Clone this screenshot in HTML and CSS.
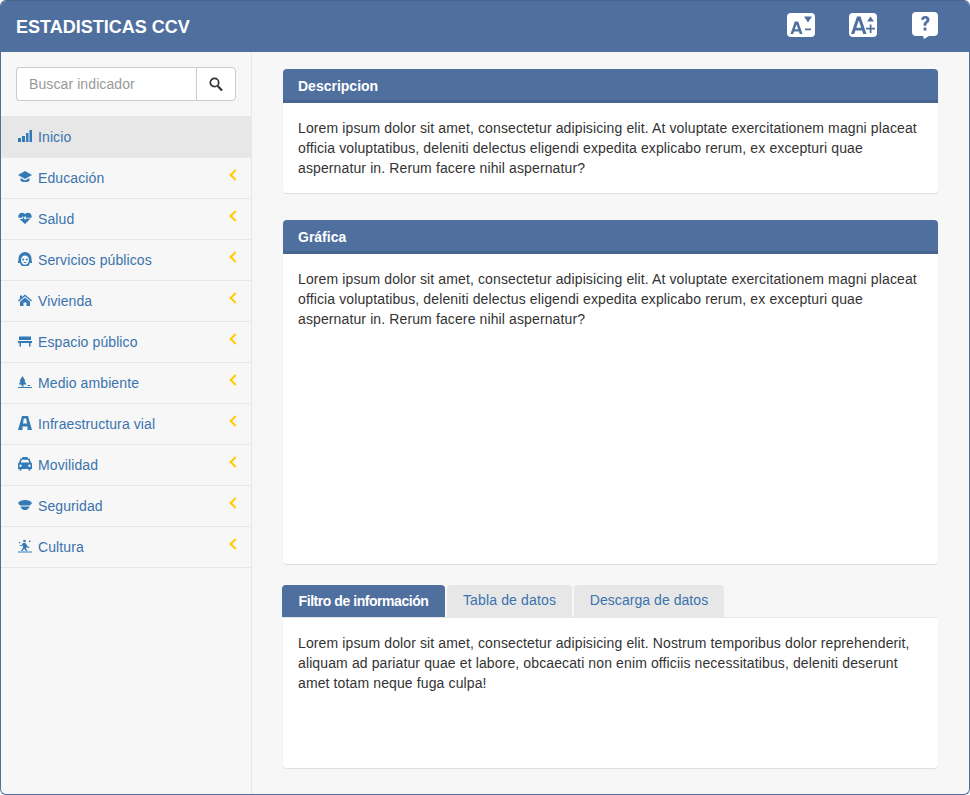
FILE: index.html
```html
<!DOCTYPE html>
<html lang="es">
<head>
<meta charset="utf-8">
<title>Estadisticas CCV</title>
<link rel="stylesheet" href="styles.css">
</head>
<body>
<div class="app">
  <header class="topbar">
    <div class="brand">ESTADISTICAS CCV</div>
    <div class="tools">
      <svg class="tool" width="28" height="24" viewBox="0 0 28 24"><rect width="28" height="24" rx="4" fill="#fff"/><path fill="#4f6f9f" fill-rule="evenodd" d="M7.800 8.500h3.400L15.500 21h-2.800l-.8-2.500H7L6.200 21H3.500ZM9.500 11.500 7.800 16.300h3.400Z"/><path fill="#4f6f9f" d="M17 3.500h8l-4 6ZM18 15.500h6v1.800h-6Z"/></svg>
      <svg class="tool" width="28" height="24" viewBox="0 0 28 24"><rect width="28" height="24" rx="4" fill="#fff"/><path fill="#4f6f9f" fill-rule="evenodd" d="M8 3.500h3.500L17.500 21h-3.300l-1.100-3.500H6.400L5.300 21H2ZM9.800 7.500 7.300 14.800h4.900Z"/><path fill="#4f6f9f" d="M21.500 3.500l3.500 5h-7ZM20.700 11.500h1.800v3.300H26v1.800h-3.500V20h-1.800v-3.400H17v-1.800h3.700Z"/></svg>
      <svg class="tool help" width="26" height="27" viewBox="0 0 26 27"><path fill="#fff" d="M4 0h18a4 4 0 0 1 4 4v16a4 4 0 0 1-4 4h-5l-5 3-1-3H4a4 4 0 0 1-4-4V4a4 4 0 0 1 4-4Z"/><path fill="#4f6f9f" d="M9 7.500C9.500 5 11 4 13.300 4c2.500 0 4.200 1.500 4.200 3.700 0 1.700-.9 2.600-2 3.400-.8.600-1.100 1-1.100 2v.6h-2.800v-.9c0-1.500.5-2.300 1.600-3.100.8-.6 1.300-1.100 1.300-1.900 0-.8-.5-1.300-1.300-1.300-.9 0-1.300.5-1.500 1.500ZM11.600 15.500h2.800V18.500h-2.800Z"/></svg>
    </div>
  </header>
  <div class="body">
    <aside class="sidebar">
      <form class="search">
        <input class="search-input" type="text" placeholder="Buscar indicador">
        <button class="search-btn" type="button" aria-label="Buscar">
          <svg width="14" height="15" viewBox="0 0 14 15"><circle cx="5.500" cy="5.500" r="4.200" fill="none" stroke="#333" stroke-width="1.700"/><path d="M8.700 8.900 13 13.500" stroke="#333" stroke-width="2.200"/></svg>
        </button>
      </form>
      <nav class="menu">
        <a class="item active" href="#"><svg class="ico" viewBox="0 0 14 14"><path d="M0 9h3v4H0zM4 7h3v6H4zM8 4h2.500v9H8zM11.500 1H14v12h-2.500z"/></svg><span>Inicio</span></a>
        <a class="item" href="#"><svg class="ico" viewBox="0 0 14 14"><path d="M7 1 14 5 7 9 0 5Z"/><path d="M2.500 8v2.500C4 12.500 10 12.500 11.500 10.500V8L7 10.500Z"/></svg><span>Educación</span><i class="chev"></i></a>
        <a class="item" href="#"><svg class="ico" viewBox="0 0 14 14"><path d="M7 13 1.500 8h3l1-2 1.500 3 1-1.500h4.500ZM.5 6.800C-.5 3 3.500 0 7 3c3.500-3 7.500 0 6.500 3.800H8.300L7.100 5 5.700 7 5 5 3.900 6.800Z"/></svg><span>Salud</span><i class="chev"></i></a>
        <a class="item" href="#"><svg class="ico" viewBox="0 0 14 14"><path fill-rule="evenodd" d="M7 0a6.500 6.500 0 0 1 6.500 6.500v2.500H14v2h-2v-1a5 5 0 0 1-10 0v1H0V9h.5V6.500A6.500 6.500 0 0 1 7 0Zm0 3.500C4.800 3.500 3 5 3 8s1.800 4.800 4 4.800 4-1.800 4-4.800-1.800-4.500-4-4.500Z"/><circle cx="5.200" cy="7.500" r="1"/><circle cx="8.800" cy="7.500" r="1"/><path d="M5.500 10h3l-.5 1H6Z"/></svg><span>Servicios públicos</span><i class="chev"></i></a>
        <a class="item" href="#"><svg class="ico" viewBox="0 0 14 14"><path d="M7 1.500 14 7.500l-.8.9L7 3.200.8 8.400 0 7.500l2-1.700V2.500h2v1.600Z"/><path d="M7 4.500 12 8.700V13H8.500V9.500h-3V13H2V8.700Z"/></svg><span>Vivienda</span><i class="chev"></i></a>
        <a class="item" href="#"><svg class="ico" viewBox="0 0 14 14"><path d="M1 2.500h12v3.500H1zM0 7h14v2H12.500V12.500H11V9H3v3.500H1.500V9H0z"/></svg><span>Espacio público</span><i class="chev"></i></a>
        <a class="item" href="#"><svg class="ico" viewBox="0 0 14 14"><path d="M4.500 1 7.500 6H6.500L8.500 9.500H5.500V11.500H3.500V9.500H.8L2.500 6H1.500Z"/><path d="M0 12h14v1H0zM9.500 10h2.500v1H9.500z"/></svg><span>Medio ambiente</span><i class="chev"></i></a>
        <a class="item" href="#"><svg class="ico" viewBox="0 0 14 14"><path fill-rule="evenodd" d="M4 0h6l4 14H9.500V10.500h-5V14H0ZM5.800 2.500 5 7.500h4L8.200 2.500Z"/></svg><span>Infraestructura vial</span><i class="chev"></i></a>
        <a class="item" href="#"><svg class="ico" viewBox="0 0 14 14"><path fill-rule="evenodd" d="M4.500 0h5l.5 1.500H11.500l1.500 4 1 1V12H12.500v1.500h-2V12H3.500v1.500h-2V12H0V6.500l1-1 1.500-4H4ZM3.700 2.800 2.800 5.500h8.400l-.9-2.700ZM2.500 7.500a1.200 1.200 0 1 0 0 2.400 1.200 1.200 0 0 0 0-2.400Zm9 0a1.200 1.200 0 1 0 0 2.400 1.200 1.200 0 0 0 0-2.400Z"/></svg><span>Movilidad</span><i class="chev"></i></a>
        <a class="item" href="#"><svg class="ico" viewBox="0 0 14 14"><path d="M7 2c3 0 6 1 7 3L12 7.500H2L0 5C1 3 4 2 7 2Z"/><path d="M2.500 8.500h9C11 11 9 12 7 12S3 11 2.500 8.500Z"/></svg><span>Seguridad</span><i class="chev"></i></a>
        <a class="item" href="#"><svg class="ico" viewBox="0 0 14 14"><circle cx="6.500" cy="2" r="1.300"/><path d="M5 4h2.500l2 3 2 1.500-.6.700L8.500 8l-.5 1.500L9.500 12H8L6 9.800 4.500 12H3L5 8.500V6L3.500 7.500 2.800 7Z"/><path d="M0 12.500h14v1H0zM1 3h1.200v1.200H1zM1.800 6h1v1h-1zM11 1.500h1.500V3H11z"/></svg><span>Cultura</span><i class="chev"></i></a>
      </nav>
    </aside>
    <main class="content">
      <section class="panel">
        <h2 class="panel-title">Descripcion</h2>
        <p class="panel-body">Lorem ipsum dolor sit amet, consectetur adipisicing elit. At voluptate exercitationem magni placeat officia voluptatibus, deleniti delectus eligendi expedita explicabo rerum, ex excepturi quae aspernatur in. Rerum facere nihil aspernatur?</p>
      </section>
      <section class="panel panel-chart">
        <h2 class="panel-title">Gráfica</h2>
        <p class="panel-body">Lorem ipsum dolor sit amet, consectetur adipisicing elit. At voluptate exercitationem magni placeat officia voluptatibus, deleniti delectus eligendi expedita explicabo rerum, ex excepturi quae aspernatur in. Rerum facere nihil aspernatur?</p>
      </section>
      <div class="tabs">
        <a class="tab current" href="#">Filtro de información</a>
        <a class="tab" href="#">Tabla de datos</a>
        <a class="tab" href="#">Descarga de datos</a>
      </div>
      <section class="tab-pane">
        <p class="panel-body">Lorem ipsum dolor sit amet, consectetur adipisicing elit. Nostrum temporibus dolor reprehenderit, aliquam ad pariatur quae et labore, obcaecati non enim officiis necessitatibus, deleniti deserunt amet totam neque fuga culpa!</p>
      </section>
    </main>
  </div>
</div>
</body>
</html>
```
FILE: styles.css
```css
* { box-sizing: border-box; }
html, body { margin: 0; padding: 0; }
body {
  width: 970px;
  height: 795px;
  overflow: hidden;
  background: #fff;
  font-family: "Liberation Sans", Arial, sans-serif;
  font-size: 14px;
  line-height: 20px;
  color: #333;
}
.app {
  width: 970px;
  height: 795px;
  border: 1px solid #4f6f9f;
  border-top-color: #47658f;
  border-radius: 6px;
  overflow: hidden;
  display: flex;
  flex-direction: column;
  background: #f7f7f7;
}
.topbar {
  flex: 0 0 51px;
  background: #4f6f9f;
  display: flex;
  align-items: center;
  justify-content: space-between;
  padding: 0 31px 0 15px;
}
.brand {
  color: #fff;
  font-size: 18px;
  font-weight: bold;
}
.tools { display: flex; align-items: center; gap: 34px; margin-top: -4px; }
.tool { display: block; }
.help { margin-left: 1px; margin-top: 1px; }
.body { flex: 1; display: flex; min-height: 0; }
.sidebar {
  width: 251px;
  border-right: 1px solid #e7e7e7;
  padding-top: 15px;
  flex: none;
}
.search {
  display: flex;
  margin: 0 15px 15px;
  height: 34px;
}
.search-input {
  width: 180px;
  height: 34px;
  border: 1px solid #ccc;
  border-right: 0;
  border-radius: 4px 0 0 4px;
  padding: 0 12px;
  font: 14px "Liberation Sans", Arial, sans-serif;
  letter-spacing: .1px;
  color: #555;
  background: #fff;
  outline: none;
}
.search-input::placeholder { color: #999; opacity: 1; }
.search-btn {
  width: 40px;
  height: 34px;
  border: 1px solid #ccc;
  border-radius: 0 4px 4px 0;
  background: #fff;
  padding: 0;
  display: flex;
  align-items: center;
  justify-content: center;
}
.menu { display: flex; flex-direction: column; }
.item {
  position: relative;
  height: 41px;
  display: flex;
  align-items: center;
  gap: 6px;
  padding: 0 0 0 17px;
  border-bottom: 1px solid #e7e7e7;
  color: #337ab7;
  text-decoration: none;
  letter-spacing: .1px;
}
.item.active { background: #e7e7e7; height: 42px; border-bottom: 0; }
.item span { color: #3a73ad; }
.ico { width: 14px; height: 14px; fill: #337ab7; flex: none; position: relative; top: -1px; }
.chev {
  position: absolute;
  left: 230px;
  top: 13px;
  width: 8px;
  height: 8px;
  border-left: 2.500px solid #fc0;
  border-bottom: 2.500px solid #fc0;
  transform: rotate(45deg);
}
.content {
  flex: 1;
  min-width: 0;
  padding: 17px 31px 0 31px;
}
.panel {
  background: #fff;
  border-radius: 4px;
  box-shadow: 0 1px 1px rgba(0,0,0,.1);
  margin-bottom: 27px;
  height: 124px;
  overflow: hidden;
}
.panel-chart { height: 344px; margin-bottom: 21px; }
.panel-title {
  margin: 0;
  height: 34px;
  background: #4f6f9f;
  border-bottom: 3px solid #476590;
  color: #fff;
  font-size: 14px;
  font-weight: bold;
  line-height: 34px;
  padding: 0 15px;
}
.panel-body {
  margin: 0;
  padding: 15px 15px 0;
  color: #333;
  letter-spacing: .12px;
}
.tabs { display: flex; gap: 2px; height: 32px; margin-left: -1px; }
.tab {
  height: 32px;
  width: 125px;
  text-align: center;
  line-height: 30px;
  background: #e7e7e7;
  color: #3a73ad;
  border-radius: 4px 4px 0 0;
  text-decoration: none;
  letter-spacing: .15px;
}
.tab:last-child { width: 150px; letter-spacing: .05px; }
.tab.current {
  width: 163px;
  background: #4f6f9f;
  color: #fff;
  font-weight: bold;
  line-height: 32px;
  letter-spacing: -0.45px;
}
.tab-pane {
  background: #fff;
  height: 151px;
  border-top: 1px solid #e7e7e7;
  border-radius: 0 0 4px 4px;
  box-shadow: 0 1px 1px rgba(0,0,0,.1);
}
```
